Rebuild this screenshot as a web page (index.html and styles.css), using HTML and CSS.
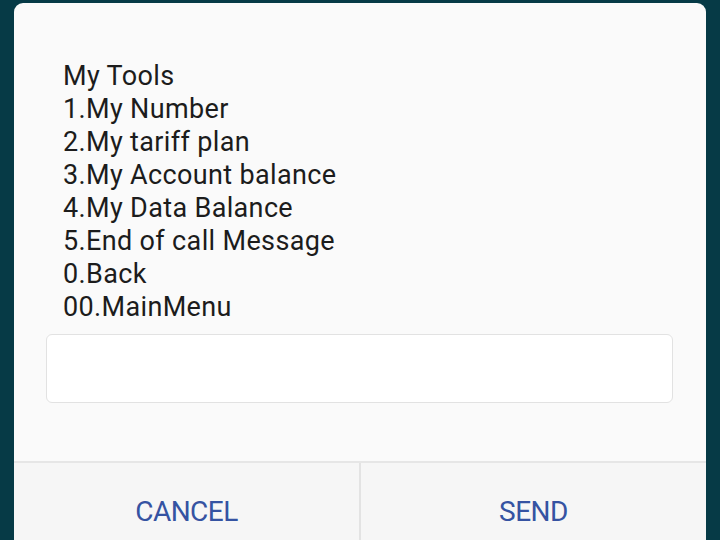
FILE: index.html
```html
<!DOCTYPE html>
<html lang="en">
<head>
    <meta charset="UTF-8">
    <meta name="viewport" content="width=device-width, initial-scale=1.0">
    <title>My Tools</title>
    <link rel="stylesheet" href="styles.css">
</head>
<body>

    <!-- USSD Dialog -->
    <div class="dialog">
        <div class="message">
            My Tools<br>
            1.My Number<br>
            2.My tariff plan<br>
            3.My Account balance<br>
            4.My Data Balance<br>
            5.End of call Message<br>
            0.Back<br>
            00.MainMenu
        </div>

        <div class="reply">
            <input type="text" class="reply-input">
        </div>

        <!-- Buttons -->
        <div class="actions">
            <button class="action">CANCEL</button>
            <button class="action">SEND</button>
        </div>
    </div>

</body>
</html>
```

FILE: styles.css
```css
* {
    margin: 0;
    padding: 0;
    box-sizing: border-box;
}

body {
    font-family: Roboto, 'Noto Sans', sans-serif;
    background-color: #063a46;
    height: 540px;
    overflow: hidden;
}

/* Dialog */
.dialog {
    margin: 3px 14px 0;
    background-color: #fafafa;
    border-radius: 9px 9px 0 0;
    min-height: 620px;
}

.message {
    padding: 57px 40px 0 49px;
    font-size: 27px;
    line-height: 33px;
    letter-spacing: 0.35px;
    color: #1c1c1c;
}

.reply {
    padding: 10px 33px 0 32px;
}

.reply-input {
    display: block;
    width: 100%;
    height: 69px;
    border: 1px solid #e2e2e2;
    border-radius: 6px;
    background-color: #fff;
    outline: none;
}

/* Buttons */
.actions {
    margin-top: 58px;
    display: flex;
    border-top: 2px solid #e6e6e6;
    background-color: #f6f6f6;
}

.action {
    flex: 1;
    height: 98px;
    padding-bottom: 2px;
    border: none;
    background: none;
    font-family: Roboto, sans-serif;
    font-size: 28px;
    color: #3553a2;
    letter-spacing: -0.5px;
}

.action + .action {
    border-left: 2px solid #e3e3e3;
}
```
